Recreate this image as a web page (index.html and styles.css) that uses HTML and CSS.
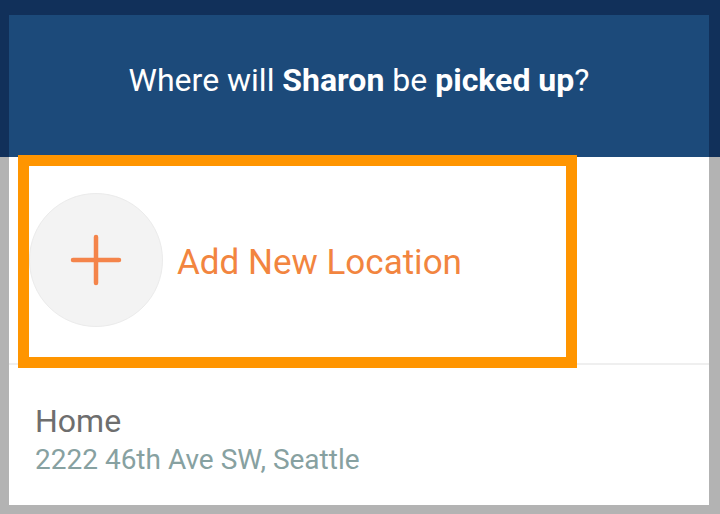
FILE: index.html
```html
<!DOCTYPE html>
<html>
<head>
<meta charset="utf-8">
<link rel="stylesheet" href="styles.css">
</head>
<body>
<div class="page">
  <div class="card">
    <div class="header">
      <h1 class="title">Where will <b>Sharon</b> be <b>picked up</b>?</h1>
    </div>
    <div class="list">
      <div class="row add-row">
        <div class="add-icon">
          <svg width="52" height="52" viewBox="0 0 52 52">
            <path d="M26 3 V49 M3 26 H49" stroke="#f4844a" stroke-width="4.5" stroke-linecap="round" fill="none"/>
          </svg>
        </div>
        <span class="add-label">Add New Location</span>
        <div class="highlight"></div>
      </div>
      <div class="row place-row">
        <div class="place-name">Home</div>
        <div class="place-addr">2222 46th Ave SW, Seattle</div>
      </div>
    </div>
  </div>
</div>
</body>
</html>
```
FILE: styles.css
```css
html, body {
  margin: 0;
  padding: 0;
}
body {
  width: 720px;
  height: 514px;
  overflow: hidden;
  font-family: Roboto, "Noto Sans", sans-serif;
  background: linear-gradient(#11305a 0, #11305a 157px, #b3b3b3 157px, #b3b3b3 100%);
}
.page {
  padding: 15px 11px 9px 9px;
  height: 490px;
}
.card {
  width: 700px;
  height: 490px;
  background: #ffffff;
  display: flex;
  flex-direction: column;
}
.header {
  height: 142px;
  background: #1c4a7a;
  display: flex;
  align-items: center;
  justify-content: center;
  padding-bottom: 13px;
  box-sizing: border-box;
}
.title {
  margin: 0;
  color: #ffffff;
  font-size: 32px;
  font-weight: 400;
}
.title b {
  font-weight: 700;
}
.list {
  display: flex;
  flex-direction: column;
}
.row {
  position: relative;
  border-bottom: 2px solid #efefef;
}
.add-row {
  height: 206px;
  display: flex;
  align-items: center;
  padding-left: 20px;
}
.add-icon {
  width: 132px;
  height: 132px;
  border-radius: 50%;
  background: #f3f3f3;
  border: 1px solid #ebebeb;
  display: flex;
  align-items: center;
  justify-content: center;
}
.add-label {
  margin-left: 14px;
  font-size: 35px;
  color: #f2853f;
  margin-top: 4px;
}
.highlight {
  position: absolute;
  left: 9px;
  top: -2px;
  width: 537px;
  height: 191px;
  border: 11px solid #ff9500;
}
.place-row {
  border-bottom: none;
  padding: 37px 0 0 26px;
}
.place-name {
  font-size: 32px;
  color: #6e6e6e;
  line-height: 38px;
}
.place-addr {
  font-size: 28px;
  color: #87a1a1;
  line-height: 30px;
  margin-top: 5px;
}
```
